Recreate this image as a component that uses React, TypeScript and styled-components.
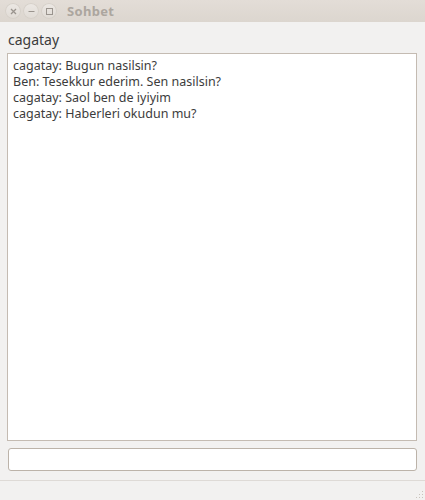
import React from 'react';
import styled, { createGlobalStyle } from 'styled-components';

const Global = createGlobalStyle`
    html, body {
        margin: 0;
        padding: 0;
        background: #f2f1f0;
    }
    body {
        font-family: "Noto Sans", "DejaVu Sans", sans-serif;
        color: #3c3c3c;
    }
`;

const Window = styled.div`
    width: 425px;
    height: 500px;
    display: flex;
    flex-direction: column;
    background: #f2f1f0;
    overflow: hidden;
`;

const TitleBar = styled.div`
    height: 22px;
    flex: none;
    display: flex;
    align-items: center;
    padding-left: 5px;
    background: linear-gradient(#e3ddd7, #dcd6cf);
    .title{
        margin-left: 8px;
        font-size: 13px;
        font-weight: 700;
        color: #aca69f;
        letter-spacing: 0.3px;
    }
`;

const CtrlButton = styled.div`
    width: 16px;
    height: 16px;
    border-radius: 50%;
    margin-right: 2px;
    background: linear-gradient(#ece8e4, #e0dbd5);
    box-shadow: 0 0 0 1px #d6d0c9 inset;
    display: flex;
    align-items: center;
    justify-content: center;
    svg{
        display: block;
    }
`;

const Body = styled.div`
    flex: 1;
    display: flex;
    flex-direction: column;
    padding: 0 8px 0 7px;
`;

const Name = styled.div`
    font-size: 14px;
    height: 31px;
    line-height: 14px;
    padding-top: 11px;
    box-sizing: border-box;
    padding-left: 1px;
    color: #3c3c3c;
`;

const ChatBox = styled.div`
    height: 388px;
    box-sizing: border-box;
    background: #fff;
    border: 1px solid #c4bbb2;
    padding: 4px 5px;
    font-size: 12.5px;
    line-height: 16px;
    color: #3c3c3c;
`;

const Input = styled.input`
    margin-top: 7px;
    margin-left: 1px;
    height: 23px;
    box-sizing: border-box;
    border: 1px solid #bcb3a9;
    border-radius: 3px;
    background: #fff;
    outline: none;
    font-family: inherit;
`;

const StatusBar = styled.div`
    height: 19px;
    flex: none;
    border-top: 1px solid #dedad6;
    position: relative;
    .grip{
        position: absolute;
        right: 1px;
        bottom: 1px;
    }
`;

const messages = [
    'cagatay: Bugun nasilsin?',
    'Ben: Tesekkur ederim. Sen nasilsin?',
    'cagatay: Saol ben de iyiyim',
    'cagatay: Haberleri okudun mu?',
];

function App() {
    return (
        <>
        <Global/>
        <Window>
            <TitleBar>
                <CtrlButton>
                    <svg width="7" height="7" viewBox="0 0 7 7"><path d="M1 1L6 6M6 1L1 6" stroke="#9a948e" strokeWidth="1.3"/></svg>
                </CtrlButton>
                <CtrlButton>
                    <svg width="7" height="7" viewBox="0 0 7 7"><path d="M0.5 3.5H6.5" stroke="#9a948e" strokeWidth="1"/></svg>
                </CtrlButton>
                <CtrlButton>
                    <svg width="7" height="7" viewBox="0 0 7 7"><rect x="0.5" y="0.5" width="6" height="6" fill="none" stroke="#9a948e" strokeWidth="1"/></svg>
                </CtrlButton>
                <span className="title">Sohbet</span>
            </TitleBar>
            <Body>
                <Name>cagatay</Name>
                <ChatBox>
                    {messages.map((m, i) => <div key={i}>{m}</div>)}
                </ChatBox>
                <Input/>
            </Body>
            <StatusBar>
                <svg className="grip" width="10" height="10" viewBox="0 0 10 10">
                    {[[8,2],[8,5],[5,5],[8,8],[5,8],[2,8]].map(([x,y],i) => (
                        <rect key={i} x={x} y={y} width="1" height="1" fill="#c9c3bc"/>
                    ))}
                </svg>
            </StatusBar>
        </Window>
        </>
    )
}

export default App;
